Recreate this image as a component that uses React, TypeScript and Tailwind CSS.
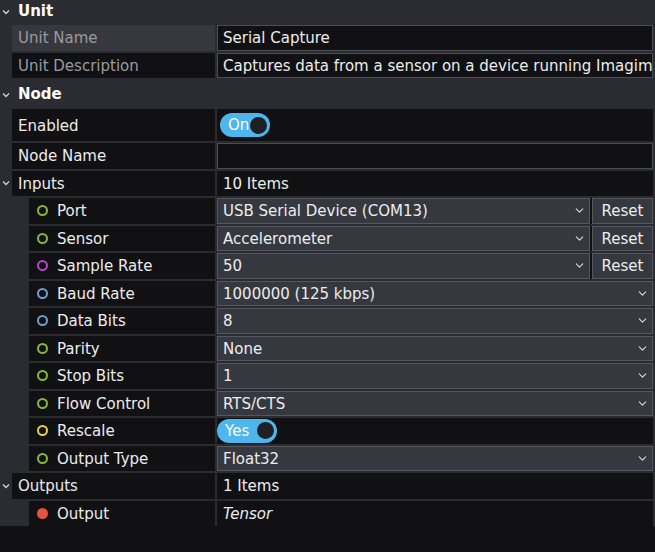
import { ChevronDown } from 'lucide-react'

type Pin = 'green' | 'purple' | 'blue' | 'yellow' | 'red'

const pinColor: Record<Pin, string> = {
  green: 'border-[#86b73c]',
  purple: 'border-[#b545c9]',
  blue: 'border-[#6f9fc8]',
  yellow: 'border-[#e3cf4a]',
  red: 'border-[#e5543f] bg-[#e5543f]',
}

function Caret() {
  return (
    <svg width="8" height="6" viewBox="0 0 8 6" className="text-[#cfd0d4]">
      <polyline points="1 1.5 4 4.5 7 1.5" fill="none" stroke="currentColor" strokeWidth="1.4" />
    </svg>
  )
}

function Header({ title }: { title: string }) {
  return (
    <div className="flex items-center h-[27px] pt-[2px]">
      <div className="w-[12px] flex justify-center"><Caret /></div>
      <span className="pl-[6px] font-bold text-white">{title}</span>
    </div>
  )
}

function Row({
  label,
  indent = false,
  muted = false,
  highlight = false,
  pin,
  tall = false,
  children,
  expand = false,
}: {
  label: string
  indent?: boolean
  muted?: boolean
  highlight?: boolean
  pin?: Pin
  tall?: boolean
  expand?: boolean
  children?: React.ReactNode
}) {
  return (
    <div className={`flex gap-[2px] ${tall ? 'h-[32px]' : 'h-[25.5px]'}`}>
      <div className={`flex ${indent ? 'w-[27px]' : 'w-[10px]'} items-center justify-end shrink-0`}>
        {expand && <Caret />}
      </div>
      <div
        className={`flex items-center ${indent ? 'w-[186px] pl-[8px]' : 'w-[203px] pl-[6px]'} shrink-0 ${
          highlight ? 'bg-[#37383d]' : 'bg-[#111114]'
        }`}
      >
        {pin && <span className={`w-[11px] h-[11px] rounded-full border-2 mr-[9px] shrink-0 ${pinColor[pin]}`} />}
        <span className={`pt-[2px] ${muted ? 'text-[#9a9aa0]' : 'text-[#ececec]'}`}>{label}</span>
      </div>
      <div className="flex flex-1 items-stretch bg-[#111114] min-w-0 mr-[2px]">{children}</div>
    </div>
  )
}

function TextVal({ value, boxed = false, italic = false }: { value: string; boxed?: boolean; italic?: boolean }) {
  return (
    <div
      className={`flex flex-1 items-center min-w-0 overflow-hidden whitespace-nowrap pt-[2px] ${
        boxed ? 'border border-[#4c4d53] pl-[5px]' : 'pl-[6px]'
      } ${italic ? 'italic' : ''}`}
    >
      {value}
    </div>
  )
}

function Select({ value, reset = false }: { value: string; reset?: boolean }) {
  return (
    <div className="flex flex-1 gap-[2px] min-w-0">
      <div className="flex flex-1 items-center justify-between bg-[#363840] border border-[#55575e] pl-[5px] pr-[3px] min-w-0">
        <span className="whitespace-nowrap pt-[2px]">{value}</span>
        <ChevronDown size={13} strokeWidth={2} className="text-[#d8d8dc]" />
      </div>
      {reset && (
        <div className="flex items-center justify-center w-[61px] pt-[2px] bg-[#363840] border border-[#55575e]">Reset</div>
      )}
    </div>
  )
}

function Toggle({ label, wide = false }: { label: string; wide?: boolean }) {
  return (
    <div className={`flex items-center ${wide ? 'pl-0' : 'pl-[3px]'}`}>
      <div
        className={`flex items-center justify-between h-[24px] rounded-full bg-[#4db6ec] pl-[8px] pr-[3px] ${
          wide ? 'w-[60px]' : 'w-[50px]'
        }`}
      >
        <span className="text-white pt-[1px]">{label}</span>
        <span className="w-[17px] h-[17px] rounded-full bg-[#1f2024]" />
      </div>
    </div>
  )
}

export default function App() {
  return (
    <div
      className="w-[655px] h-[552px] overflow-hidden bg-[#2b2c31] text-[#ececec] text-[15px] leading-none"
      style={{ fontFamily: '"DejaVu Sans", Verdana, sans-serif' }}
    >
      <div className="flex flex-col gap-[2px]">
        <div className="h-[23px] flex items-center">
          <div className="w-[12px] flex justify-center"><Caret /></div>
          <span className="pl-[6px] font-bold text-white">Unit</span>
        </div>
        <Row label="Unit Name" muted highlight>
          <TextVal value="Serial Capture" boxed />
        </Row>
        <Row label="Unit Description" muted>
          <TextVal value="Captures data from a sensor on a device running Imagimob" boxed />
        </Row>
        <Header title="Node" />
        <Row label="Enabled" tall>
          <Toggle label="On" />
        </Row>
        <Row label="Node Name">
          <TextVal value="" boxed />
        </Row>
        <Row label="Inputs" expand>
          <TextVal value="10 Items" />
        </Row>
        <Row label="Port" indent pin="green">
          <Select value="USB Serial Device (COM13)" reset />
        </Row>
        <Row label="Sensor" indent pin="green">
          <Select value="Accelerometer" reset />
        </Row>
        <Row label="Sample Rate" indent pin="purple">
          <Select value="50" reset />
        </Row>
        <Row label="Baud Rate" indent pin="blue">
          <Select value="1000000 (125 kbps)" />
        </Row>
        <Row label="Data Bits" indent pin="blue">
          <Select value="8" />
        </Row>
        <Row label="Parity" indent pin="green">
          <Select value="None" />
        </Row>
        <Row label="Stop Bits" indent pin="green">
          <Select value="1" />
        </Row>
        <Row label="Flow Control" indent pin="green">
          <Select value="RTS/CTS" />
        </Row>
        <Row label="Rescale" indent pin="yellow">
          <Toggle label="Yes" wide />
        </Row>
        <Row label="Output Type" indent pin="green">
          <Select value="Float32" />
        </Row>
        <Row label="Outputs" expand>
          <TextVal value="1 Items" />
        </Row>
        <Row label="Output" indent pin="red">
          <TextVal value="Tensor" italic />
        </Row>
      </div>
      <div className="h-[40px] bg-[#111114]" />
    </div>
  )
}
